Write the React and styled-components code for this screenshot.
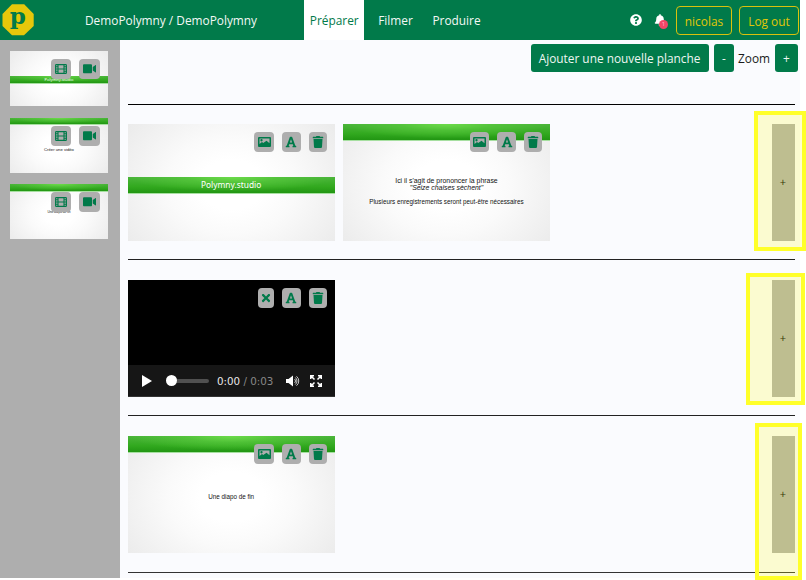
import React from "react";
import styled, { createGlobalStyle, css } from "styled-components";
import { FaQuestionCircle, FaBell, FaVideo, FaFont, FaTrash, FaTimes } from "react-icons/fa";

const green = "#017a4a";

const Global = createGlobalStyle`
  * { box-sizing: border-box; }
  body { margin: 0; background: #fff; overflow: hidden; font: 11.87px/18px "Open Sans", "Noto Sans", sans-serif; color: #1b1b1b; }
`;

const Page = styled.div`
  position: relative;
  width: 806px;
  height: 580px;
  overflow: hidden;
`;
const Shell = styled.div`
  width: 800px;
  height: 578px;
  display: flex;
  flex-direction: column;
  background: #fafbfe;
`;
const Header = styled.header`
  height: 39.5px;
  flex: none;
  display: flex;
  background: ${green};
  color: #f3f8f5;
`;
const Brand = styled.div`
  width: 85px;
  flex: none;
  padding: 4px 0 0 2px;
  svg { display: block; overflow: visible; }
`;
const Title = styled.div`
  width: 219px;
  flex: none;
  line-height: 41px;
  white-space: nowrap;
`;
const Nav = styled.nav`
  display: flex;
  gap: 8px;
  flex: none;
  width: 326px;
`;
const Tab = styled.a`
  height: 39.5px;
  line-height: 41px;
  padding: 0 5.8px;
  white-space: nowrap;
  ${(p) => p.$active && css`background: #fff; color: ${green};`}
`;
const Account = styled.div`
  display: flex;
  align-items: center;
  flex: none;
  height: 40px;
  color: #fff;
`;
const Bell = styled.span`
  position: relative;
  display: flex;
  margin: 0 7px 0 12px;
  width: 15px;
`;
const Count = styled.span`
  position: absolute;
  left: 5px;
  top: 6px;
  width: 9px;
  height: 9px;
  border-radius: 50%;
  background: #f14668;
  color: #ffb9c7;
  font-size: 6px;
  line-height: 9px;
  text-align: center;
`;
const Outline = styled.button`
  height: 29px;
  width: ${(p) => p.$w}px;
  padding: 1px 0 0;
  flex: none;
  border: 1px solid #d9c10c;
  border-radius: 4px;
  background: none;
  color: #e0c707;
  font: inherit;
  & + & { margin-left: 7px; }
`;
const Body = styled.div`
  flex: 1;
  display: flex;
  min-height: 0;
`;
const Sidebar = styled.aside`
  width: 120px;
  flex: none;
  padding: 11.5px 12px 0 10px;
  display: flex;
  flex-direction: column;
  gap: 11.5px;
  background: #aeaeae;
`;
const Main = styled.main`
  flex: 1;
  min-width: 0;
  padding: 4.5px 2px 0 7.5px;
  overflow: hidden;
`;
const Toolbar = styled.div`
  height: 60px;
  display: flex;
  justify-content: flex-end;
  align-items: flex-start;
  line-height: 29px;
`;
const Solid = styled.button`
  width: ${(p) => p.$w}px;
  height: 28px;
  padding: 0;
  border: 0;
  border-radius: 3px;
  background: ${green};
  color: #eef6f2;
  font: inherit;
  white-space: nowrap;
`;
const ZoomLabel = styled.span`
  width: 32px;
  margin: 0 5px 0 4px;
`;
const Minus = styled(Solid)`margin-left: 5.5px;`;
const Row = styled.section`
  display: flex;
  gap: 8px;
  width: 667px;
  height: 156px;
  padding-top: 20px;
  border-top: 1px solid #222;
  &:first-of-type {
    height: 155px;
    padding-top: 19px;
    border-color: #000;
  }
  &:last-of-type { height: 157px; }
`;
const Slide = styled.div`
  position: relative;
  width: ${(p) => (p.$small ? 98 : 207.3)}px;
  height: ${(p) => (p.$small ? 55 : 116.6)}px;
  flex: none;
  overflow: hidden;
  background: ${(p) => (p.$black ? "#000" : "radial-gradient(ellipse 62% 85% at 50% 52%, #fff 25%, #fafafa 50%, #ebebeb 100%)")};
`;
const Band = styled.div`
  height: ${(p) => (p.$small ? 7.5 : 16.5)}px;
  margin-top: ${(p) => p.$top || 0}px;
  border-bottom: 1px solid #a6dfa0;
  background: radial-gradient(ellipse 50% 90% at 50% 0%, #6cdb4a 0%, rgba(90,205,62,0.6) 45%, transparent 100%),
    linear-gradient(#4bb53b, #32a91f 60%, #229613);
  color: #fff;
  text-align: center;
  font: ${(p) => (p.$small ? "4px/7px" : "8.4px/16px")} "Noto Sans", sans-serif;
`;
const Caption = styled.div`
  position: absolute;
  left: 0;
  right: 0;
  top: ${(p) => p.$top}px;
  color: #111;
  text-align: center;
  white-space: nowrap;
  font: ${(p) => p.$size || 6.3}px/7px "Liberation Sans", sans-serif;
  p { margin: 0; }
  p + p { margin-top: 7px; }
`;
const Lead = styled.p`font-size: 6.9px;`;
const Tools = styled.div`
  position: absolute;
  top: 8px;
  right: 8px;
  display: flex;
  gap: 8px;
`;
const Tool = styled.button`
  display: grid;
  place-items: center;
  width: ${(p) => p.$w}px;
  height: 20px;
  padding: 0;
  border: 0;
  border-radius: 4px;
  background: #aeaeae;
  color: ${green};
`;
const Player = styled.div`
  position: absolute;
  inset: auto 0 0;
  height: 32px;
  display: flex;
  align-items: center;
  padding: 1px 0 0 14px;
  background: #161616;
  color: #e8e8e8;
  border-bottom: 1px solid #333;
  font: 10.3px/20px "DejaVu Sans", sans-serif;
  white-space: nowrap;
`;
const Track = styled.div`
  width: 38px;
  height: 4px;
  margin: 0 8.5px 0 19px;
  border-radius: 2px;
  background: #505050;
  &::before {
    content: "";
    display: block;
    width: 11px;
    height: 11px;
    margin: -3.5px 0 0 -5px;
    border-radius: 50%;
    background: #fff;
  }
`;
const Time = styled.span`
  width: 69px;
  span { color: #888; }
`;
const FullscreenIcon = styled.svg`margin-left: 10px;`;
const Add = styled.button`
  width: 23px;
  height: 116.5px;
  margin-left: auto;
  padding: 0 0 1px;
  border: 0;
  background: #aeaeae;
  color: #000;
  font: 11px "Open Sans", sans-serif;
`;
const LastRule = styled.div`
  width: 667px;
  border-top: 1px solid #333;
`;
const Highlight = styled.div`
  position: absolute;
  left: ${(p) => p.$x}px;
  top: ${(p) => p.$y}px;
  width: ${(p) => p.$w}px;
  height: ${(p) => p.$h}px;
  border: 4px solid #ffff29;
  background: rgba(255, 255, 24, 0.2);
`;
const LogoLetter = styled.text`
  font: bold 23px/1 "DejaVu Serif", "Noto Serif", serif;
  fill: ${green};
`;

const Film = () => (
  <svg width="12" height="10" viewBox="0 0 24 20" fill="none" stroke="currentColor" strokeWidth="2.2">
    <rect x="1.2" y="1.2" width="21.6" height="17.6" rx="1.5" />
    <path d="M6 1v18M18 1v18M6 10h12M1 5.5h5M1 10h5M1 14.5h5M18 5.5h5M18 10h5M18 14.5h5" />
  </svg>
);

const Picture = () => (
  <svg width="13" height="10" viewBox="0 0 26 20">
    <path
      fill="currentColor"
      fillRule="evenodd"
      d="M2 0h22a2 2 0 012 2v16a2 2 0 01-2 2H2a2 2 0 01-2-2V2a2 2 0 012-2zM3 3v11l5-4 2.5 2L17 7.5l6 5V3zM7 4.2a2.3 2.3 0 110 4.6 2.3 2.3 0 010-4.6z"
    />
  </svg>
);

const CapsuleTools = () => (
  <Tools>
    <Tool $w={20}><Film /></Tool>
    <Tool $w={21}><FaVideo size={13.5} /></Tool>
  </Tools>
);

const SlideTools = ({ video }) => (
  <Tools>
    {video ? <Tool $w={16}><FaTimes size={12} /></Tool> : <Tool $w={19.5}><Picture /></Tool>}
    <Tool $w={19}><FaFont size={12} /></Tool>
    <Tool $w={18}><FaTrash size={12} /></Tool>
  </Tools>
);

const VideoPlayer = () => (
  <Player>
    <svg width="10" height="12" viewBox="0 0 10 12" fill="#fff"><path d="M0 0l10 6-10 6z" /></svg>
    <Track />
    <Time>0:00 <span>/ 0:03</span></Time>
    <svg width="14" height="12" viewBox="0 0 14 12" fill="#fff">
      <path d="M0 4h2.5L7 0.5v11L2.5 8H0z" />
      <path d="M8.5 4a2.6 2.6 0 010 4M9.3 2.5a4.5 4.5 0 010 7M10.5 1.3a6 6 0 010 9.4" fill="none" stroke="#ddd" strokeWidth="0.9" />
    </svg>
    <FullscreenIcon width="12" height="12" viewBox="0 0 12 12" fill="none" stroke="#fff" strokeWidth="1.5">
      <path d="M.75 4V.75H4M8 .75h3.25V4M11.25 8v3.25H8M4 11.25H.75V8M1 1l3.5 3.5M11 1L7.5 4.5M1 11l3.5-3.5M11 11L7.5 7.5" />
    </FullscreenIcon>
  </Player>
);

export default function App() {
  return (
    <Page>
      <Global />
      <Shell>
        <Header>
          <Brand>
            <svg width="32" height="32" viewBox="0 0 32 32">
              <path d="M10 .3h12.2L31.7 10v12L22 31.2H10L.5 22V10z" fill="#e6c70b" />
              <LogoLetter x="15.8" y="19.5" textAnchor="middle">p</LogoLetter>
            </svg>
          </Brand>
          <Title>DemoPolymny / DemoPolymny</Title>
          <Nav>
            <Tab $active>Préparer</Tab>
            <Tab>Filmer</Tab>
            <Tab>Produire</Tab>
          </Nav>
          <Account>
            <FaQuestionCircle size={12} />
            <Bell><FaBell size={12} /><Count>1</Count></Bell>
            <Outline $w={56}>nicolas</Outline>
            <Outline $w={60}>Log out</Outline>
          </Account>
        </Header>
        <Body>
          <Sidebar>
            <Slide $small><Band $small $top={25}>Polymny.studio</Band><CapsuleTools /></Slide>
            <Slide $small><Band $small /><Caption $top={28} $size={4.2}>Créer une vidéo</Caption><CapsuleTools /></Slide>
            <Slide $small><Band $small /><Caption $top={25} $size={3.2}>Une diapo de fin</Caption><CapsuleTools /></Slide>
          </Sidebar>
          <Main>
            <Toolbar>
              <Solid $w={178}>Ajouter une nouvelle planche</Solid>
              <Minus $w={20}>-</Minus>
              <ZoomLabel>Zoom</ZoomLabel>
              <Solid $w={23}>+</Solid>
            </Toolbar>
            <Row>
              <Slide><Band $top={53}>Polymny.studio</Band><SlideTools /></Slide>
              <Slide>
                <Band />
                <Caption $top={53}>
                  <Lead>Ici il s'agit de prononcer la phrase<br /><i>"Seize chaises sèchent"</i></Lead>
                  <p>Plusieurs enregistrements seront peut-être nécessaires</p>
                </Caption>
                <SlideTools />
              </Slide>
              <Add>+</Add>
            </Row>
            <Row>
              <Slide $black><VideoPlayer /><SlideTools video /></Slide>
              <Add>+</Add>
            </Row>
            <Row>
              <Slide><Band /><Caption $top={57}>Une diapo de fin</Caption><SlideTools /></Slide>
              <Add>+</Add>
            </Row>
            <LastRule />
          </Main>
        </Body>
      </Shell>
      <Highlight $x={754} $y={111} $w={52} $h={139.5} />
      <Highlight $x={746} $y={272.5} $w={59} $h={132.5} />
      <Highlight $x={755} $y={423} $w={47} $h={157} />
    </Page>
  );
}
